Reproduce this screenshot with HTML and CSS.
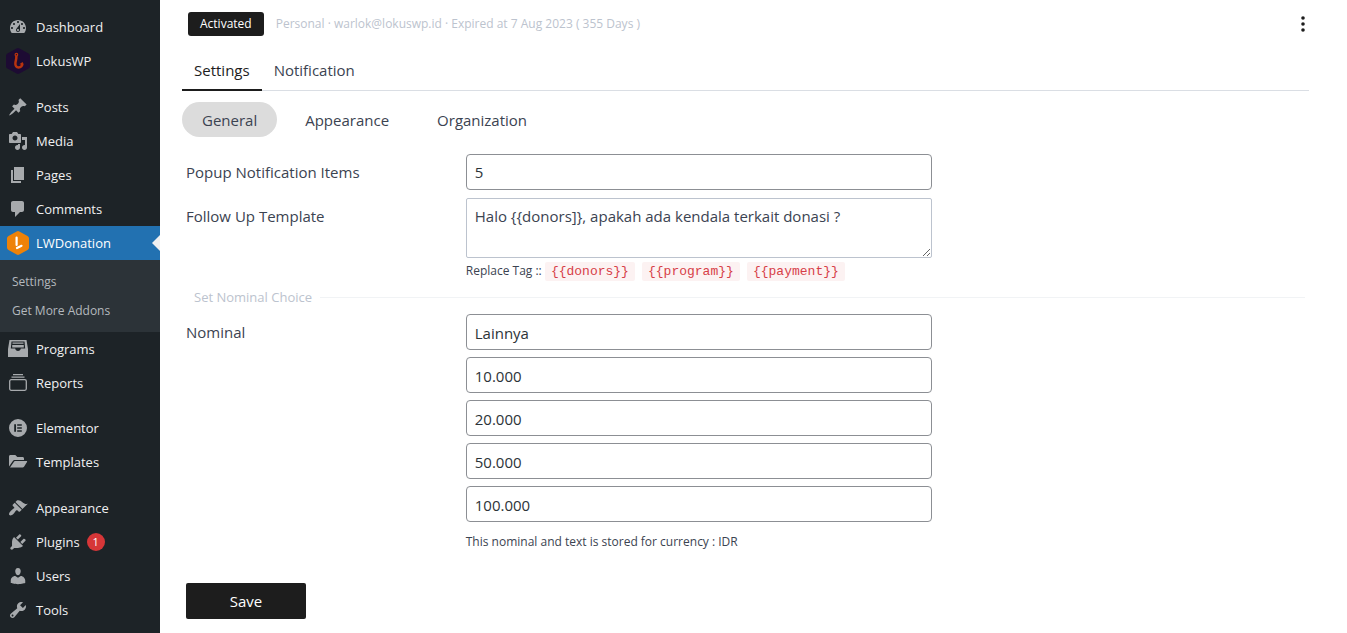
FILE: index.html
```html
<!DOCTYPE html>
<html lang="en">
<head>
<meta charset="utf-8">
<title>LWDonation Settings</title>
<link rel="stylesheet" href="styles.css">
</head>
<body>
<div class="layout">
  <nav class="sidebar" aria-label="Main menu">
    <ul class="menu-group">
      <li><a class="menu-item" href="#"><svg class="icon" viewBox="0 0 20 20"><path d="M3.76 16h12.48c1.1-1.37 1.76-3.11 1.76-5 0-4.42-3.58-8-8-8s-8 3.58-8 8c0 1.89.66 3.63 1.76 5zM10 4c.55 0 1 .45 1 1s-.45 1-1 1-1-.45-1-1 .45-1 1-1zM6 6c.55 0 1 .45 1 1s-.45 1-1 1-1-.45-1-1 .45-1 1-1zm8 0c.55 0 1 .45 1 1s-.45 1-1 1-1-.45-1-1 .45-1 1-1zm-5.37 5.55L12 7v6c0 1.1-.9 2-2 2s-2-.9-2-2c0-.57.24-1.08.63-1.45zM4 10c.55 0 1 .45 1 1s-.45 1-1 1-1-.45-1-1 .45-1 1-1zm12 0c.55 0 1 .45 1 1s-.45 1-1 1-1-.45-1-1 .45-1 1-1zm-5 3c0-.55-.45-1-1-1s-1 .45-1 1 .45 1 1 1 1-.45 1-1z"/></svg>Dashboard</a></li>
      <li><a class="menu-item" href="#"><svg class="icon logo" viewBox="0 0 28 28"><path fill="#1d0b33" d="M12.6 1.4a3 3 0 0 1 2.8 0l9.2 5a2.7 2.7 0 0 1 1.4 2.4v10.4a2.7 2.7 0 0 1-1.4 2.4l-9.2 5a3 3 0 0 1-2.8 0l-9.2-5A2.7 2.7 0 0 1 2 19.200V8.800a2.700 2.700 0 0 1 1.400-2.400z"/><circle cx="12.400" cy="7.700" r="1.300" fill="none" stroke="#b8330f" stroke-width="1.200"/><path fill="none" stroke="#b8330f" stroke-width="2.500" stroke-linecap="round" d="M12.300 9.800c.3 2-.7 4-.9 6.200-.3 3 1 4.400 3.200 4.400s3.800-1.500 3.600-3.500"/><path fill="#b8330f" d="M15.300 17.300l3.300-2.300.8 3z"/></svg>LokusWP</a></li>
    </ul>
    <ul class="menu-group">
      <li><a class="menu-item" href="#"><svg class="icon" viewBox="0 0 20 20"><path d="M10.44 3.02l1.82-1.82 6.36 6.35-1.83 1.82c-1.05-.68-2.48-.57-3.41.36l-.75.75c-.92.93-1.04 2.35-.35 3.41l-1.83 1.82-2.41-2.41-2.8 2.79c-.42.42-3.38 2.71-3.8 2.29s1.86-3.39 2.28-3.81l2.79-2.79L4.1 9.36l1.83-1.82c1.05.69 2.48.57 3.4-.36l.75-.75c.93-.92 1.05-2.35.36-3.41z"/></svg>Posts</a></li>
      <li><a class="menu-item" href="#"><svg class="icon" viewBox="0 0 20 20"><path fill-rule="evenodd" d="M13 11V4c0-.55-.45-1-1-1h-1.670L9 1H5L3.670 3H2c-.55 0-1 .45-1 1v7c0 .55.45 1 1 1h10c.55 0 1-.45 1-1zM7 4.500c1.380 0 2.500 1.120 2.500 2.500S8.380 9.500 7 9.500 4.500 8.380 4.500 7 5.620 4.500 7 4.500zM14 6h5v10.500c0 1.380-1.120 2.500-2.500 2.500S14 17.880 14 16.500s1.120-2.500 2.500-2.500c.17 0 .34.02.5.05V9h-3V6zm-4 8.050V13h2v3.500c0 1.380-1.120 2.500-2.500 2.500S7 17.880 7 16.500 8.120 14 9.500 14c.17 0 .34.02.5.05z"/></svg>Media</a></li>
      <li><a class="menu-item" href="#"><svg class="icon" viewBox="0 0 20 20"><path d="M6 15V2h10v13H6zm-1 1h8v2H3V5h2v11z"/></svg>Pages</a></li>
      <li><a class="menu-item" href="#"><svg class="icon" viewBox="0 0 20 20"><path d="M5 2h9c1.1 0 2 .9 2 2v7c0 1.1-.9 2-2 2h-2l-5 5v-5H5c-1.1 0-2-.9-2-2V4c0-1.1.9-2 2-2z"/></svg>Comments</a></li>
      <li>
        <a class="menu-item current" href="#" aria-current="page"><svg class="icon logo" viewBox="0 0 28 28"><path fill="#ee8208" d="M12.700 2.400a3 3 0 0 1 2.600 0l8.200 4.600A2.700 2.700 0 0 1 25 9.300v9.400a2.700 2.700 0 0 1-1.500 2.300l-8.200 4.600a3 3 0 0 1-2.600 0L4.500 21A2.700 2.700 0 0 1 3 18.700V9.300A2.700 2.700 0 0 1 4.500 7z"/><path fill="none" stroke="#fff" stroke-width="2.200" stroke-linecap="round" d="M12.600 8.500v7.500M13 19l4.500-2.200"/></svg>LWDonation</a>
        <ul class="submenu">
          <li><a href="#">Settings</a></li>
          <li><a href="#">Get More Addons</a></li>
        </ul>
      </li>
      <li><a class="menu-item" href="#"><svg class="icon" viewBox="0 0 20 20"><path fill-rule="evenodd" d="M1.500 1h17L20 10v8H0v-8zM3.500 2.500L2.800 9.500h4.400c.2 1.600 1.200 2.500 2.800 2.500s2.600-.9 2.800-2.500h4.400l-.7-7z"/><path d="M4.500 3.500h11v1.200h-11zM4.200 6h11.600v2.500H4.200z"/></svg>Programs</a></li>
      <li><a class="menu-item" href="#"><svg class="icon" viewBox="0 0 20 20"><path d="M5 1h10v1.200H5zM3.500 3.500h13v1.300h-13z"/><rect x="1.700" y="6.700" width="16.600" height="10.600" rx="1.500" fill="none" stroke="#a7aaad" stroke-width="1.300"/></svg>Reports</a></li>
    </ul>
    <ul class="menu-group">
      <li><a class="menu-item" href="#"><svg class="icon" viewBox="0 0 20 20"><path fill-rule="evenodd" d="M10 1a9 9 0 1 1 0 18 9 9 0 0 1 0-18zM6.200 6.200v7.600H8V6.200zm3 0v1.600h4.600V6.200zm0 3v1.600h4.600V9.200zm0 3v1.600h4.600v-1.600z"/></svg>Elementor</a></li>
      <li><a class="menu-item" href="#"><svg class="icon" viewBox="0 0 20 20"><path d="M1 14.500V4.600C1 3.700 1.600 3 2.500 3h4.800l2 2h5.200c.9 0 1.500.6 1.500 1.500V8H7c-1 0-1.800.5-2.300 1.300z"/><path d="M2 15.500l3.800-5.600c.3-.5.800-.8 1.400-.8H18.500c.6 0 .8.500.5 1l-3 4.600c-.3.500-.8.800-1.400.8z"/></svg>Templates</a></li>
    </ul>
    <ul class="menu-group last">
      <li><a class="menu-item" href="#"><svg class="icon" viewBox="0 0 20 20"><path d="M14.480 11.060L7.410 3.990l1.500-1.500c.5-.56 2.300-.47 3.510.32 1.210.8 1.430 1.280 2.910 2.100 1.180.64 2.450 1.260 4.450.85zm-.71.71L6.700 4.700 4.930 6.470c-.39.39-.39 1.020 0 1.410l1.060 1.060c.39.39.39 1.030 0 1.420-.6.6-1.430 1.110-2.210 1.690-.35.26-.7.53-1.010.84C1.430 14.230.4 16.080 1.400 17.070c.99 1 2.840-.03 4.180-1.360.31-.31.58-.66.85-1.020.57-.78 1.080-1.610 1.690-2.210.39-.39 1.020-.39 1.410 0l1.060 1.060c.39.39 1.020.39 1.410 0z"/></svg>Appearance</a></li>
      <li><a class="menu-item" href="#"><svg class="icon" viewBox="0 0 20 20"><path d="M13.110 4.360L9.870 7.600 8 5.730l3.240-3.240c.35-.34 1.050-.2 1.560.32.52.51.66 1.210.31 1.550zm-8 1.770l.91-1.120 9.010 9.010-1.190.84c-.71.71-2.630 1.160-3.820 1.160H6.140L4.900 17.260c-.59.59-1.540.59-2.120 0-.59-.58-.59-1.530 0-2.120l1.240-1.240v-3.880c0-1.130.4-3.190 1.090-3.890zm7.260 3.970l3.240-3.240c.34-.35 1.040-.21 1.550.31.52.51.66 1.210.31 1.550l-3.240 3.250z"/></svg>Plugins <span class="count">1</span></a></li>
      <li><a class="menu-item" href="#"><svg class="icon" viewBox="0 0 20 20"><path d="M10 9.250c-2.270 0-2.730-3.440-2.730-3.440C7 4.020 7.820 2 9.970 2c2.160 0 2.980 2.020 2.710 3.810 0 0-.41 3.440-2.680 3.440zm0 2.570L12.720 10c2.390 0 4.520 2.330 4.520 4.530v2.490s-3.650 1.130-7.240 1.130c-3.650 0-7.240-1.130-7.240-1.130v-2.490c0-2.250 1.940-4.480 4.470-4.480z"/></svg>Users</a></li>
      <li><a class="menu-item" href="#"><svg class="icon" viewBox="0 0 20 20"><path d="M16.680 9.770c-1.340 1.340-3.300 1.670-4.950.99l-5.410 6.520c-.99.99-2.590.99-3.580 0s-.99-2.590 0-3.570l6.520-5.420c-.68-1.650-.35-3.610.99-4.950 1.280-1.280 3.120-1.620 4.720-1.060l-2.890 2.890 2.820 2.820 2.860-2.870c.53 1.580.18 3.390-1.080 4.650zM3.810 16.210c.4.39 1.040.39 1.430 0 .4-.4.4-1.040 0-1.430-.39-.4-1.030-.4-1.430 0-.39.39-.39 1.030 0 1.430z"/></svg>Tools</a></li>
    </ul>
  </nav>

  <main class="content">
    <header class="license">
      <span class="badge">Activated</span>
      <span class="license-info">Personal · warlok@lokuswp.id · Expired at 7 Aug 2023 ( 355 Days )</span>
      <button class="more" type="button" aria-label="More options"><svg width="6" height="18" viewBox="0 0 6 18"><circle cx="3" cy="3" r="1.800"/><circle cx="3" cy="9" r="1.800"/><circle cx="3" cy="15" r="1.800"/></svg></button>
    </header>

    <nav class="tabs" aria-label="Sections">
      <a class="tab active" href="#">Settings</a>
      <a class="tab" href="#">Notification</a>
    </nav>

    <nav class="pills" aria-label="Settings pages">
      <a class="pill active" href="#">General</a>
      <a class="pill" href="#">Appearance</a>
      <a class="pill" href="#">Organization</a>
    </nav>

    <form class="form">
      <div class="row">
        <label class="label" for="items">Popup Notification Items</label>
        <input class="input" id="items" type="text" value="5">
      </div>
      <div class="row">
        <label class="label" for="template">Follow Up Template</label>
        <div class="field">
          <textarea class="input textarea" id="template">Halo {{donors]}, apakah ada kendala terkait donasi ?</textarea>
          <p class="hint tags">Replace Tag :: <code>{{donors}}</code> <code>{{program}}</code> <code>{{payment}}</code></p>
        </div>
      </div>
      <div class="divider"><span>Set Nominal Choice</span></div>
      <div class="row">
        <label class="label" for="nominal-1">Nominal</label>
        <div class="field nominal">
          <input class="input" id="nominal-1" type="text" value="Lainnya">
          <input class="input" type="text" value="10.000" aria-label="Nominal 2">
          <input class="input" type="text" value="20.000" aria-label="Nominal 3">
          <input class="input" type="text" value="50.000" aria-label="Nominal 4">
          <input class="input" type="text" value="100.000" aria-label="Nominal 5">
          <p class="hint">This nominal and text is stored for currency : IDR</p>
        </div>
      </div>
      <button class="save" type="submit">Save</button>
    </form>
  </main>
</div>
</body>
</html>
```

FILE: styles.css
```css
* {
  box-sizing: border-box;
}

body {
  margin: 0;
  background: #fff;
  color: #3b4351;
  font: 15px/20px "Open Sans", "Noto Sans", sans-serif;
}

a {
  color: inherit;
  text-decoration: none;
}

ul {
  margin: 0;
  padding: 0;
  list-style: none;
}

.layout {
  display: flex;
  min-height: 100vh;
}

/* Sidebar */
.sidebar {
  flex: none;
  width: 160px;
  padding-top: 10px;
  background: #1d2327;
  color: #f0f0f1;
  font-size: 13px;
}

.menu-group {
  padding-bottom: 11px;
}

.menu-group:first-child {
  padding-bottom: 12px;
}

.menu-group.last {
  padding: 1px 0 0;
}

.menu-item {
  position: relative;
  display: flex;
  align-items: center;
  height: 34px;
  padding-left: 8px;
}

.icon {
  flex: none;
  width: 20px;
  height: 20px;
  margin-right: 8px;
  fill: #a7aaad;
}

.logo {
  width: 28px;
  height: 28px;
  margin: 0 4px 0 -4px;
}

.menu-item.current {
  background: #2271b1;
  color: #fff;
}

.menu-item.current::after {
  content: "";
  position: absolute;
  top: 9px;
  right: 0;
  border: 8px solid transparent;
  border-left: 0;
  border-right-color: #f0f0f1;
}

.submenu {
  padding: 7px 0;
  background: #2c3338;
  color: #b4b9be;
  font-size: 12px;
}

.submenu a {
  display: block;
  padding: 5px 12px 4px;
}

.count {
  width: 18px;
  height: 18px;
  margin-left: 7px;
  border-radius: 9px;
  background: #d63638;
  color: #fff;
  font-size: 11px;
  line-height: 18px;
  text-align: center;
}

/* Content */
.content {
  flex: 1;
  padding: 12px 38px 14px 22px;
}

.license {
  display: flex;
  align-items: center;
  padding-left: 6px;
}

.badge {
  padding: 2px 12px;
  border-radius: 3px;
  background: #1d1d1d;
  color: #fff;
  font-size: 12px;
}

.license-info {
  margin-left: 12px;
  color: #bcc3ce;
  font-size: 12px;
}

.more {
  display: flex;
  margin-left: auto;
  padding: 3px;
  border: 0;
  background: none;
  fill: #1d1d1d;
}

.tabs {
  display: flex;
  margin-top: 15px;
  border-bottom: 1px solid #dadee4;
}

.tab {
  margin-bottom: -1px;
  padding: 9px 12px;
  border-bottom: 2px solid transparent;
}

.tab.active {
  border-color: #1d1d1d;
  color: #1d1d1d;
}

.pills {
  display: flex;
  gap: 8px;
  margin-top: 11px;
}

.pill {
  padding: 8px 20px 7px;
  border-radius: 18px;
}

.pill.active {
  background: #dcdcdc;
}

/* Form */
.form {
  padding: 17px 4px 0;
}

.row {
  display: grid;
  grid-template-columns: 3fr 5fr 4fr;
  align-items: start;
}

.row + .row {
  margin-top: 8px;
}

.label {
  padding: 8px 0;
}

.input {
  display: block;
  width: 100%;
  height: 36px;
  padding: 0 8px;
  border: 1px solid #8c8f94;
  border-radius: 4px;
  background: #fff;
  color: #2c3338;
  font: inherit;
}

.textarea {
  height: 60px;
  padding: 7px 8px;
  border-color: #bcc3ce;
  border-radius: 2px;
  color: #3b4351;
  resize: vertical;
}

.hint {
  margin: 0;
  font-size: 12px;
}

.tags {
  padding: 3px 0 6px;
}

.tags code {
  margin-right: 4px;
  padding: 2px 6px;
  border-radius: 2px;
  background: #fcf2f2;
  color: #d73e48;
  font: 13px/15px "Liberation Mono", monospace;
}

.divider {
  display: flex;
  align-items: center;
  gap: 8px;
  padding-left: 8px;
  color: #bcc3ce;
  font-size: 13px;
}

.divider::after {
  content: "";
  flex: 1;
  height: 1px;
  background: #f1f3f5;
}

.divider + .row {
  margin-top: 7px;
}

.nominal {
  display: grid;
  gap: 7px;
}

.nominal .input {
  padding-top: 2px;
}

.nominal .hint {
  margin-top: 3px;
}

.save {
  display: block;
  width: 120px;
  height: 36px;
  margin-top: 31px;
  border: 0;
  border-radius: 2px;
  background: #1d1d1d;
  color: #fff;
  font: inherit;
}
```
